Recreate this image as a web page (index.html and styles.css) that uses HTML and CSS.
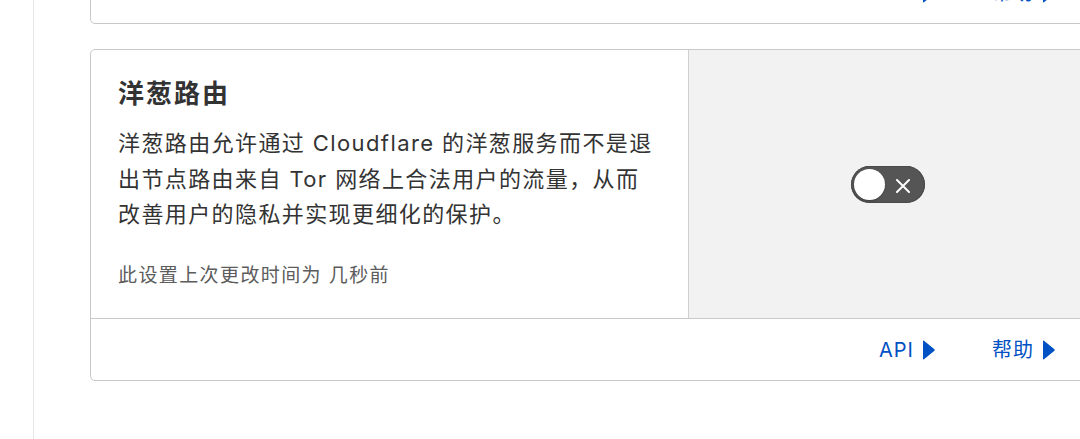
FILE: index.html
```html
<!DOCTYPE html>
<html lang="zh-CN">
<head>
<meta charset="utf-8">
<title>洋葱路由</title>
<link rel="stylesheet" href="styles.css">
</head>
<body>
<div class="layout">
  <aside class="sidebar"></aside>
  <main class="main">
    <section class="card card--prev">
      <div class="card-footer card-footer--first">
        <a class="link" href="#">API<svg class="caret" viewBox="0 0 12 20" aria-hidden="true"><path d="M1 0.8 L11.4 9.2 Q12 10 11.4 10.8 L1 19.2 Q0 19.8 0 18.6 V1.4 Q0 0.2 1 0.8 Z"/></svg></a>
        <a class="link" href="#">帮助<svg class="caret" viewBox="0 0 12 20" aria-hidden="true"><path d="M1 0.8 L11.4 9.2 Q12 10 11.4 10.8 L1 19.2 Q0 19.8 0 18.6 V1.4 Q0 0.2 1 0.8 Z"/></svg></a>
      </div>
    </section>

    <section class="card">
      <div class="card-body">
        <div class="card-text">
          <h2 class="card-title">洋葱路由</h2>
          <p class="card-desc">洋葱路由允许通过 Cloudflare 的洋葱服务而不是退出节点路由来自 Tor 网络上合法用户的流量，从而改善用户的隐私并实现更细化的保护。</p>
          <p class="card-meta">此设置上次更改时间为 几秒前</p>
        </div>
        <div class="card-control">
          <button class="toggle" type="button" aria-pressed="false" aria-label="洋葱路由">
            <span class="toggle-knob"></span>
            <svg class="toggle-x" viewBox="0 0 14 14" aria-hidden="true"><path d="M1 1 L13 13 M13 1 L1 13"/></svg>
          </button>
        </div>
      </div>
      <div class="card-footer">
        <a class="link" href="#">API<svg class="caret" viewBox="0 0 12 20" aria-hidden="true"><path d="M1 0.8 L11.4 9.2 Q12 10 11.4 10.8 L1 19.2 Q0 19.8 0 18.6 V1.4 Q0 0.2 1 0.8 Z"/></svg></a>
        <a class="link" href="#">帮助<svg class="caret" viewBox="0 0 12 20" aria-hidden="true"><path d="M1 0.8 L11.4 9.2 Q12 10 11.4 10.8 L1 19.2 Q0 19.8 0 18.6 V1.4 Q0 0.2 1 0.8 Z"/></svg></a>
      </div>
    </section>
  </main>
</div>
</body>
</html>
```

FILE: styles.css
```css
html, body {
  margin: 0;
  padding: 0;
  background: #ffffff;
  overflow: hidden;
}

body {
  font-family: Inter, "Noto Sans CJK SC", "Noto Sans", sans-serif;
  color: #333333;
}

.layout {
  display: flex;
  height: 439px;
  overflow: hidden;
}

.sidebar {
  flex: none;
  width: 33px;
  border-right: 1px solid #e6e6e6;
}

.main {
  flex: 1;
  min-width: 0;
  padding-left: 56px;
  margin-top: -39px;
  display: flex;
  flex-direction: column;
  gap: 25px;
}

.card {
  flex: none;
  width: 998px;
  box-sizing: border-box;
  border: 1px solid #c9c9c9;
  border-radius: 5px;
  background: #ffffff;
  overflow: hidden;
}

.card-body {
  display: grid;
  grid-template-columns: 598px 1fr;
  height: 268px;
}

.card-text {
  border-right: 1px solid #d0d0d0;
  padding: 28px 35px 0 27px;
}

.card-title {
  margin: 0;
  font-size: 26px;
  line-height: 32px;
  font-weight: 700;
  letter-spacing: 2px;
  color: #333333;
}

.card-desc {
  margin: 16px 0 0 0;
  font-size: 22px;
  line-height: 35.5px;
  letter-spacing: 1.4px;
  color: #333333;
}

.card-meta {
  margin: 28px 0 0 0;
  font-size: 19px;
  line-height: 29px;
  letter-spacing: 1.4px;
  color: #5c5c5c;
}

.card-control {
  background: #f2f2f2;
  display: flex;
  align-items: center;
  justify-content: center;
}

.toggle {
  position: relative;
  width: 74px;
  height: 37px;
  padding: 0;
  margin: 0;
  border: none;
  border-radius: 19px;
  background: #555555;
  box-shadow: inset 0 0 0 1px #4a4a4a;
  cursor: pointer;
}

.toggle-knob {
  position: absolute;
  left: 3px;
  top: 3px;
  width: 31px;
  height: 31px;
  border-radius: 50%;
  background: #ffffff;
  box-shadow: 0 1px 2px rgba(0, 0, 0, 0.25);
}

.toggle-x {
  position: absolute;
  left: 45px;
  top: 13px;
  width: 14px;
  height: 14px;
  fill: none;
  stroke: #ffffff;
  stroke-width: 2;
  stroke-linecap: round;
}

.card-footer {
  border-top: 1px solid #c9c9c9;
  height: 61px;
  display: flex;
  align-items: center;
  justify-content: flex-end;
  gap: 57px;
  padding-right: 32px;
}

.card-footer--first {
  border-top: none;
}

.link {
  display: inline-flex;
  align-items: center;
  gap: 9px;
  font-size: 20px;
  line-height: 28px;
  letter-spacing: 1px;
  color: #0051c3;
  text-decoration: none;
}

.caret {
  width: 12px;
  height: 20px;
  fill: #0051c3;
}
```
